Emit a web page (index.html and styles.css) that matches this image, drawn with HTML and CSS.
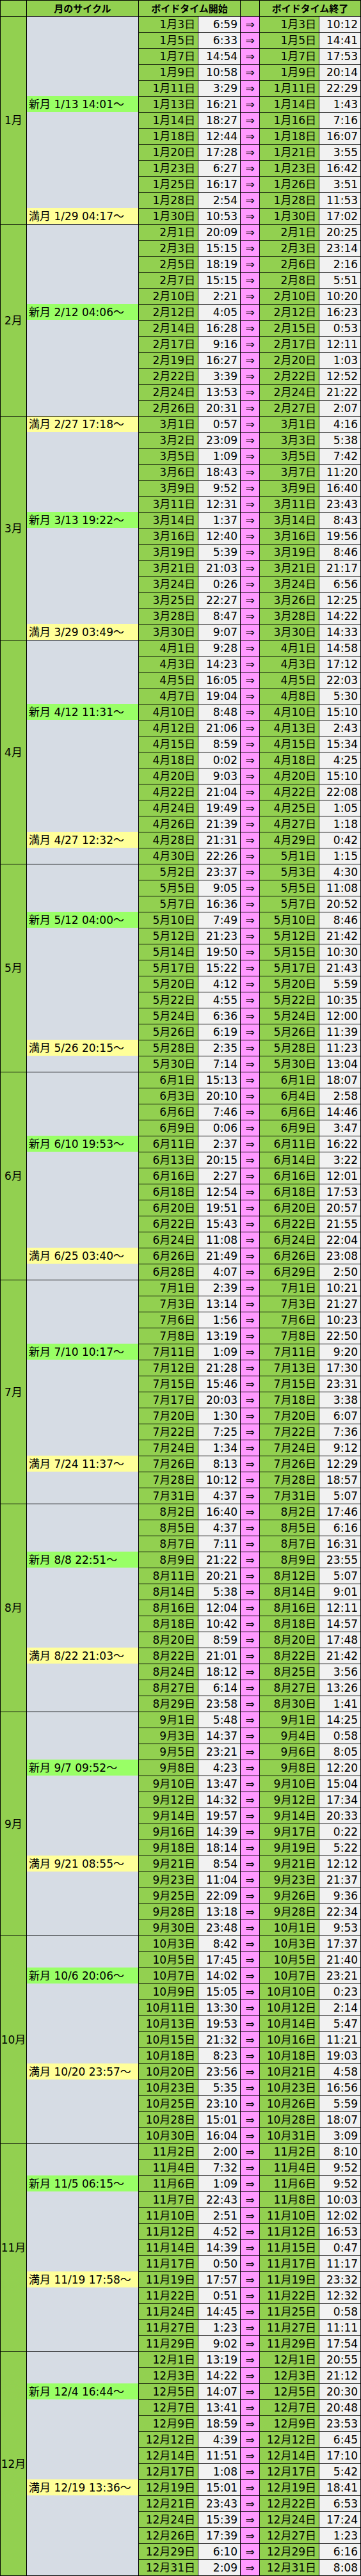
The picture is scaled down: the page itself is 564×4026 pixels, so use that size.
FILE: index.html
```html
<!DOCTYPE html>
<html lang="ja">
<head>
<meta charset="utf-8">
<title>ボイドタイム</title>
<link rel="stylesheet" href="styles.css">
</head>
<body>
<table class="void">
<colgroup>
<col class="c-mon"><col class="c-cy"><col class="c-d"><col class="c-t"><col class="c-a"><col class="c-d"><col class="c-t">
</colgroup>
<thead>
<tr><th></th><th>月のサイクル</th><th colspan="2">ボイドタイム開始</th><th></th><th colspan="2">ボイドタイム終了</th></tr>
</thead>
<tbody>
<tr class="m"><td class="mon" rowspan="13">1月</td><td class="cy"></td><td class="d">1月3日</td><td class="t">6:59</td><td class="a">⇒</td><td class="d">1月3日</td><td class="t">10:12</td></tr>
<tr><td class="cy"></td><td class="d">1月5日</td><td class="t">6:33</td><td class="a">⇒</td><td class="d">1月5日</td><td class="t">14:41</td></tr>
<tr><td class="cy"></td><td class="d">1月7日</td><td class="t">14:54</td><td class="a">⇒</td><td class="d">1月7日</td><td class="t">17:53</td></tr>
<tr><td class="cy"></td><td class="d">1月9日</td><td class="t">10:58</td><td class="a">⇒</td><td class="d">1月9日</td><td class="t">20:14</td></tr>
<tr><td class="cy"></td><td class="d">1月11日</td><td class="t">3:29</td><td class="a">⇒</td><td class="d">1月11日</td><td class="t">22:29</td></tr>
<tr><td class="cy new">新月 1/13 14:01～</td><td class="d">1月13日</td><td class="t">16:21</td><td class="a">⇒</td><td class="d">1月14日</td><td class="t">1:43</td></tr>
<tr><td class="cy"></td><td class="d">1月14日</td><td class="t">18:27</td><td class="a">⇒</td><td class="d">1月16日</td><td class="t">7:16</td></tr>
<tr><td class="cy"></td><td class="d">1月18日</td><td class="t">12:44</td><td class="a">⇒</td><td class="d">1月18日</td><td class="t">16:07</td></tr>
<tr><td class="cy"></td><td class="d">1月20日</td><td class="t">17:28</td><td class="a">⇒</td><td class="d">1月21日</td><td class="t">3:55</td></tr>
<tr><td class="cy"></td><td class="d">1月23日</td><td class="t">6:27</td><td class="a">⇒</td><td class="d">1月23日</td><td class="t">16:42</td></tr>
<tr><td class="cy"></td><td class="d">1月25日</td><td class="t">16:17</td><td class="a">⇒</td><td class="d">1月26日</td><td class="t">3:51</td></tr>
<tr><td class="cy"></td><td class="d">1月28日</td><td class="t">2:54</td><td class="a">⇒</td><td class="d">1月28日</td><td class="t">11:53</td></tr>
<tr><td class="cy full">満月 1/29 04:17～</td><td class="d">1月30日</td><td class="t">10:53</td><td class="a">⇒</td><td class="d">1月30日</td><td class="t">17:02</td></tr>

<tr class="m"><td class="mon" rowspan="12">2月</td><td class="cy"></td><td class="d">2月1日</td><td class="t">20:09</td><td class="a">⇒</td><td class="d">2月1日</td><td class="t">20:25</td></tr>
<tr><td class="cy"></td><td class="d">2月3日</td><td class="t">15:15</td><td class="a">⇒</td><td class="d">2月3日</td><td class="t">23:14</td></tr>
<tr><td class="cy"></td><td class="d">2月5日</td><td class="t">18:19</td><td class="a">⇒</td><td class="d">2月6日</td><td class="t">2:16</td></tr>
<tr><td class="cy"></td><td class="d">2月7日</td><td class="t">15:15</td><td class="a">⇒</td><td class="d">2月8日</td><td class="t">5:51</td></tr>
<tr><td class="cy"></td><td class="d">2月10日</td><td class="t">2:21</td><td class="a">⇒</td><td class="d">2月10日</td><td class="t">10:20</td></tr>
<tr><td class="cy new">新月 2/12 04:06～</td><td class="d">2月12日</td><td class="t">4:05</td><td class="a">⇒</td><td class="d">2月12日</td><td class="t">16:23</td></tr>
<tr><td class="cy"></td><td class="d">2月14日</td><td class="t">16:28</td><td class="a">⇒</td><td class="d">2月15日</td><td class="t">0:53</td></tr>
<tr><td class="cy"></td><td class="d">2月17日</td><td class="t">9:16</td><td class="a">⇒</td><td class="d">2月17日</td><td class="t">12:11</td></tr>
<tr><td class="cy"></td><td class="d">2月19日</td><td class="t">16:27</td><td class="a">⇒</td><td class="d">2月20日</td><td class="t">1:03</td></tr>
<tr><td class="cy"></td><td class="d">2月22日</td><td class="t">3:39</td><td class="a">⇒</td><td class="d">2月22日</td><td class="t">12:52</td></tr>
<tr><td class="cy"></td><td class="d">2月24日</td><td class="t">13:53</td><td class="a">⇒</td><td class="d">2月24日</td><td class="t">21:22</td></tr>
<tr><td class="cy"></td><td class="d">2月26日</td><td class="t">20:31</td><td class="a">⇒</td><td class="d">2月27日</td><td class="t">2:07</td></tr>

<tr class="m"><td class="mon" rowspan="14">3月</td><td class="cy full">満月 2/27 17:18～</td><td class="d">3月1日</td><td class="t">0:57</td><td class="a">⇒</td><td class="d">3月1日</td><td class="t">4:16</td></tr>
<tr><td class="cy"></td><td class="d">3月2日</td><td class="t">23:09</td><td class="a">⇒</td><td class="d">3月3日</td><td class="t">5:38</td></tr>
<tr><td class="cy"></td><td class="d">3月5日</td><td class="t">1:09</td><td class="a">⇒</td><td class="d">3月5日</td><td class="t">7:42</td></tr>
<tr><td class="cy"></td><td class="d">3月6日</td><td class="t">18:43</td><td class="a">⇒</td><td class="d">3月7日</td><td class="t">11:20</td></tr>
<tr><td class="cy"></td><td class="d">3月9日</td><td class="t">9:52</td><td class="a">⇒</td><td class="d">3月9日</td><td class="t">16:40</td></tr>
<tr><td class="cy"></td><td class="d">3月11日</td><td class="t">12:31</td><td class="a">⇒</td><td class="d">3月11日</td><td class="t">23:43</td></tr>
<tr><td class="cy new">新月 3/13 19:22～</td><td class="d">3月14日</td><td class="t">1:37</td><td class="a">⇒</td><td class="d">3月14日</td><td class="t">8:43</td></tr>
<tr><td class="cy"></td><td class="d">3月16日</td><td class="t">12:40</td><td class="a">⇒</td><td class="d">3月16日</td><td class="t">19:56</td></tr>
<tr><td class="cy"></td><td class="d">3月19日</td><td class="t">5:39</td><td class="a">⇒</td><td class="d">3月19日</td><td class="t">8:46</td></tr>
<tr><td class="cy"></td><td class="d">3月21日</td><td class="t">21:03</td><td class="a">⇒</td><td class="d">3月21日</td><td class="t">21:17</td></tr>
<tr><td class="cy"></td><td class="d">3月24日</td><td class="t">0:26</td><td class="a">⇒</td><td class="d">3月24日</td><td class="t">6:56</td></tr>
<tr><td class="cy"></td><td class="d">3月25日</td><td class="t">22:27</td><td class="a">⇒</td><td class="d">3月26日</td><td class="t">12:25</td></tr>
<tr><td class="cy"></td><td class="d">3月28日</td><td class="t">8:47</td><td class="a">⇒</td><td class="d">3月28日</td><td class="t">14:22</td></tr>
<tr><td class="cy full">満月 3/29 03:49～</td><td class="d">3月30日</td><td class="t">9:07</td><td class="a">⇒</td><td class="d">3月30日</td><td class="t">14:33</td></tr>

<tr class="m"><td class="mon" rowspan="14">4月</td><td class="cy"></td><td class="d">4月1日</td><td class="t">9:28</td><td class="a">⇒</td><td class="d">4月1日</td><td class="t">14:58</td></tr>
<tr><td class="cy"></td><td class="d">4月3日</td><td class="t">14:23</td><td class="a">⇒</td><td class="d">4月3日</td><td class="t">17:12</td></tr>
<tr><td class="cy"></td><td class="d">4月5日</td><td class="t">16:05</td><td class="a">⇒</td><td class="d">4月5日</td><td class="t">22:03</td></tr>
<tr><td class="cy"></td><td class="d">4月7日</td><td class="t">19:04</td><td class="a">⇒</td><td class="d">4月8日</td><td class="t">5:30</td></tr>
<tr><td class="cy new">新月 4/12 11:31～</td><td class="d">4月10日</td><td class="t">8:48</td><td class="a">⇒</td><td class="d">4月10日</td><td class="t">15:10</td></tr>
<tr><td class="cy"></td><td class="d">4月12日</td><td class="t">21:06</td><td class="a">⇒</td><td class="d">4月13日</td><td class="t">2:43</td></tr>
<tr><td class="cy"></td><td class="d">4月15日</td><td class="t">8:59</td><td class="a">⇒</td><td class="d">4月15日</td><td class="t">15:34</td></tr>
<tr><td class="cy"></td><td class="d">4月18日</td><td class="t">0:02</td><td class="a">⇒</td><td class="d">4月18日</td><td class="t">4:25</td></tr>
<tr><td class="cy"></td><td class="d">4月20日</td><td class="t">9:03</td><td class="a">⇒</td><td class="d">4月20日</td><td class="t">15:10</td></tr>
<tr><td class="cy"></td><td class="d">4月22日</td><td class="t">21:04</td><td class="a">⇒</td><td class="d">4月22日</td><td class="t">22:08</td></tr>
<tr><td class="cy"></td><td class="d">4月24日</td><td class="t">19:49</td><td class="a">⇒</td><td class="d">4月25日</td><td class="t">1:05</td></tr>
<tr><td class="cy"></td><td class="d">4月26日</td><td class="t">21:39</td><td class="a">⇒</td><td class="d">4月27日</td><td class="t">1:18</td></tr>
<tr><td class="cy full">満月 4/27 12:32～</td><td class="d">4月28日</td><td class="t">21:31</td><td class="a">⇒</td><td class="d">4月29日</td><td class="t">0:42</td></tr>
<tr><td class="cy"></td><td class="d">4月30日</td><td class="t">22:26</td><td class="a">⇒</td><td class="d">5月1日</td><td class="t">1:15</td></tr>

<tr class="m"><td class="mon" rowspan="13">5月</td><td class="cy"></td><td class="d">5月2日</td><td class="t">23:37</td><td class="a">⇒</td><td class="d">5月3日</td><td class="t">4:30</td></tr>
<tr><td class="cy"></td><td class="d">5月5日</td><td class="t">9:05</td><td class="a">⇒</td><td class="d">5月5日</td><td class="t">11:08</td></tr>
<tr><td class="cy"></td><td class="d">5月7日</td><td class="t">16:36</td><td class="a">⇒</td><td class="d">5月7日</td><td class="t">20:52</td></tr>
<tr><td class="cy new">新月 5/12 04:00～</td><td class="d">5月10日</td><td class="t">7:49</td><td class="a">⇒</td><td class="d">5月10日</td><td class="t">8:46</td></tr>
<tr><td class="cy"></td><td class="d">5月12日</td><td class="t">21:23</td><td class="a">⇒</td><td class="d">5月12日</td><td class="t">21:42</td></tr>
<tr><td class="cy"></td><td class="d">5月14日</td><td class="t">19:50</td><td class="a">⇒</td><td class="d">5月15日</td><td class="t">10:30</td></tr>
<tr><td class="cy"></td><td class="d">5月17日</td><td class="t">15:22</td><td class="a">⇒</td><td class="d">5月17日</td><td class="t">21:43</td></tr>
<tr><td class="cy"></td><td class="d">5月20日</td><td class="t">4:12</td><td class="a">⇒</td><td class="d">5月20日</td><td class="t">5:59</td></tr>
<tr><td class="cy"></td><td class="d">5月22日</td><td class="t">4:55</td><td class="a">⇒</td><td class="d">5月22日</td><td class="t">10:35</td></tr>
<tr><td class="cy"></td><td class="d">5月24日</td><td class="t">6:36</td><td class="a">⇒</td><td class="d">5月24日</td><td class="t">12:00</td></tr>
<tr><td class="cy"></td><td class="d">5月26日</td><td class="t">6:19</td><td class="a">⇒</td><td class="d">5月26日</td><td class="t">11:39</td></tr>
<tr><td class="cy full">満月 5/26 20:15～</td><td class="d">5月28日</td><td class="t">2:35</td><td class="a">⇒</td><td class="d">5月28日</td><td class="t">11:23</td></tr>
<tr><td class="cy"></td><td class="d">5月30日</td><td class="t">7:14</td><td class="a">⇒</td><td class="d">5月30日</td><td class="t">13:04</td></tr>

<tr class="m"><td class="mon" rowspan="13">6月</td><td class="cy"></td><td class="d">6月1日</td><td class="t">15:13</td><td class="a">⇒</td><td class="d">6月1日</td><td class="t">18:07</td></tr>
<tr><td class="cy"></td><td class="d">6月3日</td><td class="t">20:10</td><td class="a">⇒</td><td class="d">6月4日</td><td class="t">2:58</td></tr>
<tr><td class="cy"></td><td class="d">6月6日</td><td class="t">7:46</td><td class="a">⇒</td><td class="d">6月6日</td><td class="t">14:46</td></tr>
<tr><td class="cy"></td><td class="d">6月9日</td><td class="t">0:06</td><td class="a">⇒</td><td class="d">6月9日</td><td class="t">3:47</td></tr>
<tr><td class="cy new">新月 6/10 19:53～</td><td class="d">6月11日</td><td class="t">2:37</td><td class="a">⇒</td><td class="d">6月11日</td><td class="t">16:22</td></tr>
<tr><td class="cy"></td><td class="d">6月13日</td><td class="t">20:15</td><td class="a">⇒</td><td class="d">6月14日</td><td class="t">3:22</td></tr>
<tr><td class="cy"></td><td class="d">6月16日</td><td class="t">2:27</td><td class="a">⇒</td><td class="d">6月16日</td><td class="t">12:01</td></tr>
<tr><td class="cy"></td><td class="d">6月18日</td><td class="t">12:54</td><td class="a">⇒</td><td class="d">6月18日</td><td class="t">17:53</td></tr>
<tr><td class="cy"></td><td class="d">6月20日</td><td class="t">19:51</td><td class="a">⇒</td><td class="d">6月20日</td><td class="t">20:57</td></tr>
<tr><td class="cy"></td><td class="d">6月22日</td><td class="t">15:43</td><td class="a">⇒</td><td class="d">6月22日</td><td class="t">21:55</td></tr>
<tr><td class="cy"></td><td class="d">6月24日</td><td class="t">11:08</td><td class="a">⇒</td><td class="d">6月24日</td><td class="t">22:04</td></tr>
<tr><td class="cy full">満月 6/25 03:40～</td><td class="d">6月26日</td><td class="t">21:49</td><td class="a">⇒</td><td class="d">6月26日</td><td class="t">23:08</td></tr>
<tr><td class="cy"></td><td class="d">6月28日</td><td class="t">4:07</td><td class="a">⇒</td><td class="d">6月29日</td><td class="t">2:50</td></tr>

<tr class="m"><td class="mon" rowspan="14">7月</td><td class="cy"></td><td class="d">7月1日</td><td class="t">2:39</td><td class="a">⇒</td><td class="d">7月1日</td><td class="t">10:21</td></tr>
<tr><td class="cy"></td><td class="d">7月3日</td><td class="t">13:14</td><td class="a">⇒</td><td class="d">7月3日</td><td class="t">21:27</td></tr>
<tr><td class="cy"></td><td class="d">7月6日</td><td class="t">1:56</td><td class="a">⇒</td><td class="d">7月6日</td><td class="t">10:23</td></tr>
<tr><td class="cy"></td><td class="d">7月8日</td><td class="t">13:19</td><td class="a">⇒</td><td class="d">7月8日</td><td class="t">22:50</td></tr>
<tr><td class="cy new">新月 7/10 10:17～</td><td class="d">7月11日</td><td class="t">1:09</td><td class="a">⇒</td><td class="d">7月11日</td><td class="t">9:20</td></tr>
<tr><td class="cy"></td><td class="d">7月12日</td><td class="t">21:28</td><td class="a">⇒</td><td class="d">7月13日</td><td class="t">17:30</td></tr>
<tr><td class="cy"></td><td class="d">7月15日</td><td class="t">15:46</td><td class="a">⇒</td><td class="d">7月15日</td><td class="t">23:31</td></tr>
<tr><td class="cy"></td><td class="d">7月17日</td><td class="t">20:03</td><td class="a">⇒</td><td class="d">7月18日</td><td class="t">3:38</td></tr>
<tr><td class="cy"></td><td class="d">7月20日</td><td class="t">1:30</td><td class="a">⇒</td><td class="d">7月20日</td><td class="t">6:07</td></tr>
<tr><td class="cy"></td><td class="d">7月22日</td><td class="t">7:25</td><td class="a">⇒</td><td class="d">7月22日</td><td class="t">7:36</td></tr>
<tr><td class="cy"></td><td class="d">7月24日</td><td class="t">1:34</td><td class="a">⇒</td><td class="d">7月24日</td><td class="t">9:12</td></tr>
<tr><td class="cy full">満月 7/24 11:37～</td><td class="d">7月26日</td><td class="t">8:13</td><td class="a">⇒</td><td class="d">7月26日</td><td class="t">12:29</td></tr>
<tr><td class="cy"></td><td class="d">7月28日</td><td class="t">10:12</td><td class="a">⇒</td><td class="d">7月28日</td><td class="t">18:57</td></tr>
<tr><td class="cy"></td><td class="d">7月31日</td><td class="t">4:37</td><td class="a">⇒</td><td class="d">7月31日</td><td class="t">5:07</td></tr>

<tr class="m"><td class="mon" rowspan="13">8月</td><td class="cy"></td><td class="d">8月2日</td><td class="t">16:40</td><td class="a">⇒</td><td class="d">8月2日</td><td class="t">17:46</td></tr>
<tr><td class="cy"></td><td class="d">8月5日</td><td class="t">4:37</td><td class="a">⇒</td><td class="d">8月5日</td><td class="t">6:16</td></tr>
<tr><td class="cy"></td><td class="d">8月7日</td><td class="t">7:11</td><td class="a">⇒</td><td class="d">8月7日</td><td class="t">16:31</td></tr>
<tr><td class="cy new">新月 8/8 22:51～</td><td class="d">8月9日</td><td class="t">21:22</td><td class="a">⇒</td><td class="d">8月9日</td><td class="t">23:55</td></tr>
<tr><td class="cy"></td><td class="d">8月11日</td><td class="t">20:21</td><td class="a">⇒</td><td class="d">8月12日</td><td class="t">5:07</td></tr>
<tr><td class="cy"></td><td class="d">8月14日</td><td class="t">5:38</td><td class="a">⇒</td><td class="d">8月14日</td><td class="t">9:01</td></tr>
<tr><td class="cy"></td><td class="d">8月16日</td><td class="t">12:04</td><td class="a">⇒</td><td class="d">8月16日</td><td class="t">12:11</td></tr>
<tr><td class="cy"></td><td class="d">8月18日</td><td class="t">10:42</td><td class="a">⇒</td><td class="d">8月18日</td><td class="t">14:57</td></tr>
<tr><td class="cy"></td><td class="d">8月20日</td><td class="t">8:59</td><td class="a">⇒</td><td class="d">8月20日</td><td class="t">17:48</td></tr>
<tr><td class="cy full">満月 8/22 21:03～</td><td class="d">8月22日</td><td class="t">21:01</td><td class="a">⇒</td><td class="d">8月22日</td><td class="t">21:42</td></tr>
<tr><td class="cy"></td><td class="d">8月24日</td><td class="t">18:12</td><td class="a">⇒</td><td class="d">8月25日</td><td class="t">3:56</td></tr>
<tr><td class="cy"></td><td class="d">8月27日</td><td class="t">6:14</td><td class="a">⇒</td><td class="d">8月27日</td><td class="t">13:26</td></tr>
<tr><td class="cy"></td><td class="d">8月29日</td><td class="t">23:58</td><td class="a">⇒</td><td class="d">8月30日</td><td class="t">1:41</td></tr>

<tr class="m"><td class="mon" rowspan="14">9月</td><td class="cy"></td><td class="d">9月1日</td><td class="t">5:48</td><td class="a">⇒</td><td class="d">9月1日</td><td class="t">14:25</td></tr>
<tr><td class="cy"></td><td class="d">9月3日</td><td class="t">14:37</td><td class="a">⇒</td><td class="d">9月4日</td><td class="t">0:58</td></tr>
<tr><td class="cy"></td><td class="d">9月5日</td><td class="t">23:21</td><td class="a">⇒</td><td class="d">9月6日</td><td class="t">8:05</td></tr>
<tr><td class="cy new">新月 9/7 09:52～</td><td class="d">9月8日</td><td class="t">4:23</td><td class="a">⇒</td><td class="d">9月8日</td><td class="t">12:20</td></tr>
<tr><td class="cy"></td><td class="d">9月10日</td><td class="t">13:47</td><td class="a">⇒</td><td class="d">9月10日</td><td class="t">15:04</td></tr>
<tr><td class="cy"></td><td class="d">9月12日</td><td class="t">14:32</td><td class="a">⇒</td><td class="d">9月12日</td><td class="t">17:34</td></tr>
<tr><td class="cy"></td><td class="d">9月14日</td><td class="t">19:57</td><td class="a">⇒</td><td class="d">9月14日</td><td class="t">20:33</td></tr>
<tr><td class="cy"></td><td class="d">9月16日</td><td class="t">14:39</td><td class="a">⇒</td><td class="d">9月17日</td><td class="t">0:22</td></tr>
<tr><td class="cy"></td><td class="d">9月18日</td><td class="t">18:14</td><td class="a">⇒</td><td class="d">9月19日</td><td class="t">5:22</td></tr>
<tr><td class="cy full">満月 9/21 08:55～</td><td class="d">9月21日</td><td class="t">8:54</td><td class="a">⇒</td><td class="d">9月21日</td><td class="t">12:12</td></tr>
<tr><td class="cy"></td><td class="d">9月23日</td><td class="t">11:04</td><td class="a">⇒</td><td class="d">9月23日</td><td class="t">21:37</td></tr>
<tr><td class="cy"></td><td class="d">9月25日</td><td class="t">22:09</td><td class="a">⇒</td><td class="d">9月26日</td><td class="t">9:36</td></tr>
<tr><td class="cy"></td><td class="d">9月28日</td><td class="t">13:18</td><td class="a">⇒</td><td class="d">9月28日</td><td class="t">22:34</td></tr>
<tr><td class="cy"></td><td class="d">9月30日</td><td class="t">23:48</td><td class="a">⇒</td><td class="d">10月1日</td><td class="t">9:53</td></tr>

<tr class="m"><td class="mon" rowspan="13">10月</td><td class="cy"></td><td class="d">10月3日</td><td class="t">8:42</td><td class="a">⇒</td><td class="d">10月3日</td><td class="t">17:37</td></tr>
<tr><td class="cy"></td><td class="d">10月5日</td><td class="t">17:45</td><td class="a">⇒</td><td class="d">10月5日</td><td class="t">21:40</td></tr>
<tr><td class="cy new">新月 10/6 20:06～</td><td class="d">10月7日</td><td class="t">14:02</td><td class="a">⇒</td><td class="d">10月7日</td><td class="t">23:21</td></tr>
<tr><td class="cy"></td><td class="d">10月9日</td><td class="t">15:05</td><td class="a">⇒</td><td class="d">10月10日</td><td class="t">0:23</td></tr>
<tr><td class="cy"></td><td class="d">10月11日</td><td class="t">13:30</td><td class="a">⇒</td><td class="d">10月12日</td><td class="t">2:14</td></tr>
<tr><td class="cy"></td><td class="d">10月13日</td><td class="t">19:53</td><td class="a">⇒</td><td class="d">10月14日</td><td class="t">5:47</td></tr>
<tr><td class="cy"></td><td class="d">10月15日</td><td class="t">21:32</td><td class="a">⇒</td><td class="d">10月16日</td><td class="t">11:21</td></tr>
<tr><td class="cy"></td><td class="d">10月18日</td><td class="t">8:23</td><td class="a">⇒</td><td class="d">10月18日</td><td class="t">19:03</td></tr>
<tr><td class="cy full">満月 10/20 23:57～</td><td class="d">10月20日</td><td class="t">23:56</td><td class="a">⇒</td><td class="d">10月21日</td><td class="t">4:58</td></tr>
<tr><td class="cy"></td><td class="d">10月23日</td><td class="t">5:35</td><td class="a">⇒</td><td class="d">10月23日</td><td class="t">16:56</td></tr>
<tr><td class="cy"></td><td class="d">10月25日</td><td class="t">23:10</td><td class="a">⇒</td><td class="d">10月26日</td><td class="t">5:59</td></tr>
<tr><td class="cy"></td><td class="d">10月28日</td><td class="t">15:01</td><td class="a">⇒</td><td class="d">10月28日</td><td class="t">18:07</td></tr>
<tr><td class="cy"></td><td class="d">10月30日</td><td class="t">16:04</td><td class="a">⇒</td><td class="d">10月31日</td><td class="t">3:09</td></tr>

<tr class="m"><td class="mon" rowspan="13">11月</td><td class="cy"></td><td class="d">11月2日</td><td class="t">2:00</td><td class="a">⇒</td><td class="d">11月2日</td><td class="t">8:10</td></tr>
<tr><td class="cy"></td><td class="d">11月4日</td><td class="t">7:32</td><td class="a">⇒</td><td class="d">11月4日</td><td class="t">9:52</td></tr>
<tr><td class="cy new">新月 11/5 06:15～</td><td class="d">11月6日</td><td class="t">1:09</td><td class="a">⇒</td><td class="d">11月6日</td><td class="t">9:52</td></tr>
<tr><td class="cy"></td><td class="d">11月7日</td><td class="t">22:43</td><td class="a">⇒</td><td class="d">11月8日</td><td class="t">10:03</td></tr>
<tr><td class="cy"></td><td class="d">11月10日</td><td class="t">2:51</td><td class="a">⇒</td><td class="d">11月10日</td><td class="t">12:02</td></tr>
<tr><td class="cy"></td><td class="d">11月12日</td><td class="t">4:52</td><td class="a">⇒</td><td class="d">11月12日</td><td class="t">16:53</td></tr>
<tr><td class="cy"></td><td class="d">11月14日</td><td class="t">14:39</td><td class="a">⇒</td><td class="d">11月15日</td><td class="t">0:47</td></tr>
<tr><td class="cy"></td><td class="d">11月17日</td><td class="t">0:50</td><td class="a">⇒</td><td class="d">11月17日</td><td class="t">11:17</td></tr>
<tr><td class="cy full">満月 11/19 17:58～</td><td class="d">11月19日</td><td class="t">17:57</td><td class="a">⇒</td><td class="d">11月19日</td><td class="t">23:32</td></tr>
<tr><td class="cy"></td><td class="d">11月22日</td><td class="t">0:51</td><td class="a">⇒</td><td class="d">11月22日</td><td class="t">12:32</td></tr>
<tr><td class="cy"></td><td class="d">11月24日</td><td class="t">14:45</td><td class="a">⇒</td><td class="d">11月25日</td><td class="t">0:58</td></tr>
<tr><td class="cy"></td><td class="d">11月27日</td><td class="t">1:23</td><td class="a">⇒</td><td class="d">11月27日</td><td class="t">11:11</td></tr>
<tr><td class="cy"></td><td class="d">11月29日</td><td class="t">9:02</td><td class="a">⇒</td><td class="d">11月29日</td><td class="t">17:54</td></tr>

<tr class="m"><td class="mon" rowspan="14">12月</td><td class="cy"></td><td class="d">12月1日</td><td class="t">13:19</td><td class="a">⇒</td><td class="d">12月1日</td><td class="t">20:55</td></tr>
<tr><td class="cy"></td><td class="d">12月3日</td><td class="t">14:22</td><td class="a">⇒</td><td class="d">12月3日</td><td class="t">21:12</td></tr>
<tr><td class="cy new">新月 12/4 16:44～</td><td class="d">12月5日</td><td class="t">14:07</td><td class="a">⇒</td><td class="d">12月5日</td><td class="t">20:30</td></tr>
<tr><td class="cy"></td><td class="d">12月7日</td><td class="t">13:41</td><td class="a">⇒</td><td class="d">12月7日</td><td class="t">20:48</td></tr>
<tr><td class="cy"></td><td class="d">12月9日</td><td class="t">18:59</td><td class="a">⇒</td><td class="d">12月9日</td><td class="t">23:53</td></tr>
<tr><td class="cy"></td><td class="d">12月12日</td><td class="t">4:39</td><td class="a">⇒</td><td class="d">12月12日</td><td class="t">6:45</td></tr>
<tr><td class="cy"></td><td class="d">12月14日</td><td class="t">11:51</td><td class="a">⇒</td><td class="d">12月14日</td><td class="t">17:10</td></tr>
<tr><td class="cy"></td><td class="d">12月17日</td><td class="t">1:08</td><td class="a">⇒</td><td class="d">12月17日</td><td class="t">5:42</td></tr>
<tr><td class="cy full">満月 12/19 13:36～</td><td class="d">12月19日</td><td class="t">15:01</td><td class="a">⇒</td><td class="d">12月19日</td><td class="t">18:41</td></tr>
<tr><td class="cy"></td><td class="d">12月21日</td><td class="t">23:43</td><td class="a">⇒</td><td class="d">12月22日</td><td class="t">6:53</td></tr>
<tr><td class="cy"></td><td class="d">12月24日</td><td class="t">15:39</td><td class="a">⇒</td><td class="d">12月24日</td><td class="t">17:24</td></tr>
<tr><td class="cy"></td><td class="d">12月26日</td><td class="t">17:39</td><td class="a">⇒</td><td class="d">12月27日</td><td class="t">1:23</td></tr>
<tr><td class="cy"></td><td class="d">12月29日</td><td class="t">6:10</td><td class="a">⇒</td><td class="d">12月29日</td><td class="t">6:16</td></tr>
<tr><td class="cy"></td><td class="d">12月31日</td><td class="t">2:09</td><td class="a">⇒</td><td class="d">12月31日</td><td class="t">8:08</td></tr>
</tbody>
</table>
</body>
</html>
```

FILE: styles.css
```css
html, body {
  margin: 0;
  padding: 0;
  background: #ffffff;
}

.void {
  border-collapse: separate;
  border-spacing: 0;
  table-layout: fixed;
  width: 564px;
  border-left: 1px solid #000;
  border-bottom: 1px solid #000;
  font-family: "DejaVu Sans", "Noto Sans CJK JP", sans-serif;
  font-size: 17px;
  color: #000;
}

.c-mon { width: 41px; }
.c-cy  { width: 175px; }
.c-d   { width: 93px; }
.c-t   { width: 66px; }
.c-a   { width: 30px; }
.void col:last-child { width: 65px; }

.void th,
.void td {
  border-top: 1px solid #000;
  border-right: 1px solid #000;
  padding: 0 4px 0 0;
  line-height: 24px;
  white-space: nowrap;
  overflow: hidden;
  vertical-align: middle;
}

.void th {
  background: #92d050;
  font-family: "Noto Sans CJK JP", sans-serif;
  font-weight: bold;
  font-size: 15px;
  text-align: center;
  padding: 0;
}

.void td.mon {
  background: #92d050;
  text-align: center;
  padding: 0;
}

.void td.cy {
  border-top: 0;
  padding: 1px 0 0 3px;
  text-align: left;
  background: #d6dce4;
}

.void tr.m td.cy {
  border-top: 1px solid #000;
  padding-top: 0;
}

.void td.cy.new { background: #99ff66; }
.void td.cy.full { background: #ffff99; }

.void td.d {
  background: #92d050;
  text-align: right;
}

.void td.t {
  background: #f2f2f2;
  text-align: right;
}

.void td.a {
  background: #ff99ff;
  text-align: center;
  padding: 0;
}
```
